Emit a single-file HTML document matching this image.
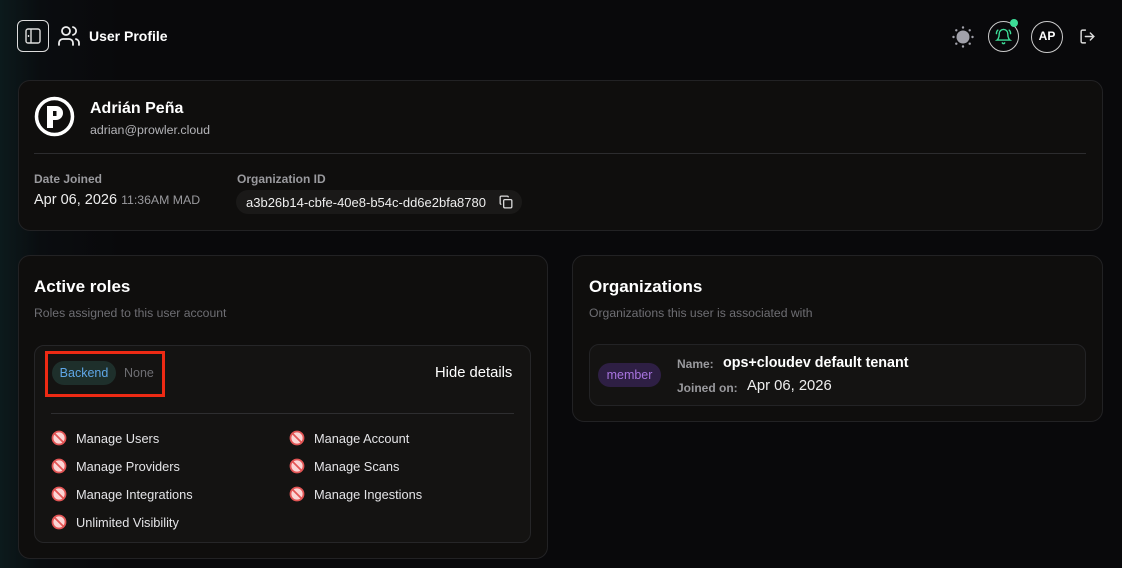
<!DOCTYPE html>
<html><head><meta charset="utf-8"><style>
*{box-sizing:border-box;margin:0;padding:0}
body{width:1122px;height:568px;overflow:hidden;font-family:"Liberation Sans",sans-serif;color:#fff;
background:linear-gradient(90deg,#0c1a1c 0px,#0a0d10 40px,#09090b 120px,#09090b 100%);position:relative}
.card{position:absolute;background:#0f0e0d;border:1px solid #222224;border-radius:12px}
.abs{position:absolute}
.muted{color:#9a9a9e}
.perm{position:absolute;font-size:12.8px;color:#e4e4e7;display:flex;align-items:center;gap:9px}
.perm svg{width:16px;height:16px}
</style></head><body>
<div class="abs" style="left:17px;top:20px;width:32px;height:32px;border:1.5px solid #ddd;border-radius:6px"></div>
<svg class="abs" style="left:24px;top:27px" width="18" height="18" viewBox="0 0 18 18" fill="none" stroke="#ddd" stroke-width="1.4"><rect x="2" y="2" width="14" height="14" rx="2"/><line x1="7" y1="2" x2="7" y2="16"/><path d="M4.5 8v2"/></svg>
<svg class="abs" style="left:57px;top:24px" width="24" height="24" viewBox="0 0 24 24" fill="none" stroke="#eee" stroke-width="1.8" stroke-linecap="round"><circle cx="9" cy="7" r="4"/><path d="M2 21v-2a4 4 0 0 1 4-4h6a4 4 0 0 1 4 4v2"/><path d="M16 3.1a4 4 0 0 1 0 7.8"/><path d="M22 21v-2a4 4 0 0 0-3-3.9"/></svg>
<div class="abs" style="left:89px;top:28px;font-size:14px;font-weight:bold">User Profile</div>
<svg class="abs" style="left:951px;top:25px" width="24" height="24" viewBox="0 0 24 24"><circle cx="12" cy="12" r="6.5" fill="#a1a1aa"/><g fill="#a1a1aa"><circle cx="12" cy="2.5" r="1.2"/><circle cx="12" cy="21.5" r="1.2"/><circle cx="2.5" cy="12" r="1.2"/><circle cx="21.5" cy="12" r="1.2"/><circle cx="5.3" cy="5.3" r="1.2"/><circle cx="18.7" cy="18.7" r="1.2"/><circle cx="5.3" cy="18.7" r="1.2"/><circle cx="18.7" cy="5.3" r="1.2"/></g></svg>
<div class="abs" style="left:988px;top:21px;width:31px;height:31px;border:1.5px solid #ccc;border-radius:50%"></div>
<svg class="abs" style="left:995px;top:28px" width="17" height="17" viewBox="0 0 24 24" fill="none" stroke="#3ddc97" stroke-width="2" stroke-linecap="round"><path d="M6 8a6 6 0 0 1 12 0c0 7 3 9 3 9H3s3-2 3-9"/><path d="M10.3 21a1.9 1.9 0 0 0 3.4 0"/><path d="M2 8c0-2 .8-4 2-5M22 8c0-2-.8-4-2-5"/></svg>
<div class="abs" style="left:1010px;top:19px;width:8px;height:8px;background:#3ddc97;border-radius:50%"></div>
<div class="abs" style="left:1031px;top:21px;width:32px;height:32px;border:1.5px solid #ccc;border-radius:50%;font-size:12px;font-weight:bold;text-align:center;line-height:29px">AP</div>
<svg class="abs" style="left:1079px;top:28px" width="17" height="17" viewBox="0 0 24 24" fill="none" stroke="#ddd" stroke-width="2" stroke-linecap="round"><path d="M9 21H5a2 2 0 0 1-2-2V5a2 2 0 0 1 2-2h4"/><path d="M16 17l5-5-5-5M21 12H9"/></svg>

<div class="card" style="left:18px;top:80px;width:1085px;height:151px"></div>
<svg class="abs" style="left:34px;top:96px" width="41" height="41" viewBox="0 0 41 41"><circle cx="20.5" cy="20.5" r="18" fill="none" stroke="#fff" stroke-width="3.5"/><path d="M13 10h9a7 7 0 0 1 0 14h-3v8h-6z" fill="#fff"/><rect x="19" y="15" width="3.5" height="5" fill="#0f0e0d"/></svg>
<div class="abs" style="left:90px;top:100px;font-size:16px;font-weight:bold">Adrián Peña</div>
<div class="abs muted" style="left:90px;top:123px;font-size:12.4px;color:#b4b4b8">adrian@prowler.cloud</div>
<div class="abs" style="left:34px;top:153px;width:1052px;height:1px;background:#2c2c2e"></div>
<div class="abs muted" style="left:34px;top:172px;font-size:12px;font-weight:bold">Date Joined</div>
<div class="abs" style="left:34px;top:192px;font-size:14.5px;color:#eee">Apr 06, 2026 <span style="font-size:12.3px;color:#9a9a9e">11:36AM MAD</span></div>
<div class="abs muted" style="left:237px;top:172px;font-size:12px;font-weight:bold">Organization ID</div>
<div class="abs" style="left:236px;top:190px;width:286px;height:24px;background:#1a1918;border-radius:12px;font-size:13px;color:#eee;padding:5px 0 0 10px">a3b26b14-cbfe-40e8-b54c-dd6e2bfa8780</div>
<svg class="abs" style="left:499px;top:195px" width="14" height="14" viewBox="0 0 24 24" fill="none" stroke="#ddd" stroke-width="2.2"><rect x="8" y="8" width="14" height="14" rx="2"/><path d="M4 16a2 2 0 0 1-2-2V4a2 2 0 0 1 2-2h10a2 2 0 0 1 2 2"/></svg>

<div class="card" style="left:18px;top:255px;width:530px;height:304px"></div>
<div class="abs" style="left:34px;top:277px;font-size:17px;font-weight:bold">Active roles</div>
<div class="abs" style="left:34px;top:306px;font-size:12.2px;color:#6e6e73">Roles assigned to this user account</div>
<div class="abs" style="left:34px;top:345px;width:497px;height:198px;background:#141312;border:1px solid #262628;border-radius:10px"></div>
<div class="abs" style="left:52px;top:361px;width:64px;height:24px;background:#1e2f2b;border-radius:12px;font-size:12.5px;color:#5fa6e6;text-align:center;line-height:24px">Backend</div>
<div class="abs" style="left:124px;top:366px;font-size:12.5px;color:#6e6e73">None</div>
<div class="abs" style="left:45px;top:351px;width:120px;height:46px;border:3px solid #ee2a14"></div>
<div class="abs" style="left:435px;top:365px;font-size:14.8px;color:#fff">Hide details</div>
<div class="abs" style="left:51px;top:413px;width:463px;height:1px;background:#2e2e30"></div>
<svg width="0" height="0" style="position:absolute"><defs><symbol id="no" viewBox="0 0 16 16"><circle cx="8" cy="8" r="6.5" fill="#fbd5d5" stroke="#e25555" stroke-width="1.8"/><line x1="3.5" y1="3.5" x2="12.5" y2="12.5" stroke="#e25555" stroke-width="1.8"/></symbol></defs></svg>
<div class="perm" style="left:51px;top:430px"><svg><use href="#no"/></svg>Manage Users</div>
<div class="perm" style="left:51px;top:458px"><svg><use href="#no"/></svg>Manage Providers</div>
<div class="perm" style="left:51px;top:486px"><svg><use href="#no"/></svg>Manage Integrations</div>
<div class="perm" style="left:51px;top:514px"><svg><use href="#no"/></svg>Unlimited Visibility</div>
<div class="perm" style="left:289px;top:430px"><svg><use href="#no"/></svg>Manage Account</div>
<div class="perm" style="left:289px;top:458px"><svg><use href="#no"/></svg>Manage Scans</div>
<div class="perm" style="left:289px;top:486px"><svg><use href="#no"/></svg>Manage Ingestions</div>

<div class="card" style="left:572px;top:255px;width:531px;height:167px"></div>
<div class="abs" style="left:589px;top:277px;font-size:17px;font-weight:bold">Organizations</div>
<div class="abs" style="left:589px;top:306px;font-size:12.2px;color:#6e6e73">Organizations this user is associated with</div>
<div class="abs" style="left:589px;top:344px;width:497px;height:62px;background:#141312;border:1px solid #232325;border-radius:10px"></div>
<div class="abs" style="left:598px;top:363px;width:63px;height:24px;background:#2e1f44;border-radius:12px;font-size:12.5px;color:#a874e0;text-align:center;line-height:24px">member</div>
<div class="abs" style="left:677px;top:357px;font-size:12px;color:#9a9a9e;font-weight:bold">Name:</div>
<div class="abs" style="left:723px;top:355px;font-size:14.3px;font-weight:bold">ops+cloudev default tenant</div>
<div class="abs" style="left:677px;top:381px;font-size:12px;color:#9a9a9e;font-weight:bold">Joined on:</div>
<div class="abs" style="left:747px;top:378px;font-size:14.8px;color:#eee">Apr 06, 2026</div>
</body></html>
